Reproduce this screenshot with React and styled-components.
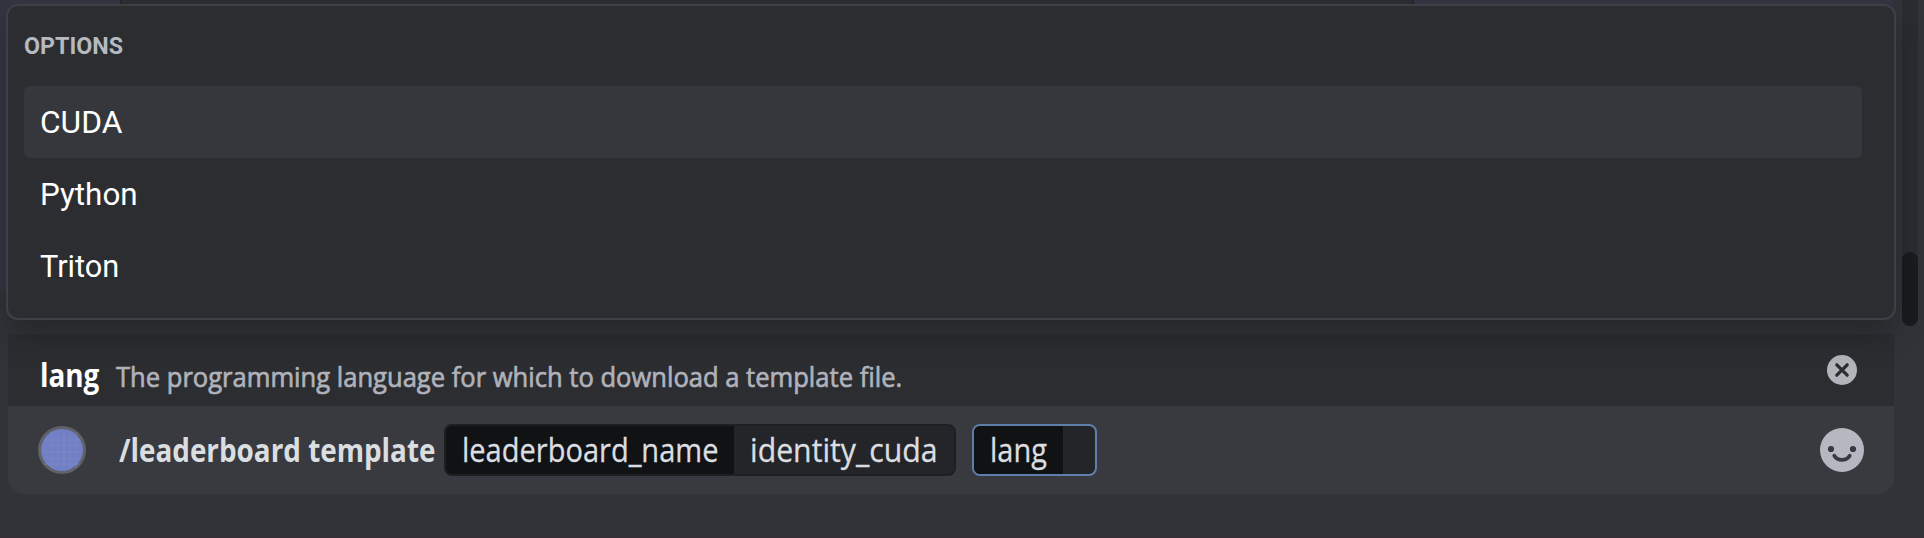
import React from "react";
import styled, { createGlobalStyle } from "styled-components";

const Global = createGlobalStyle`
  * { box-sizing: border-box; }
  body { margin: 0; background: #313338; overflow: hidden; font-family: "Open Sans", "Noto Sans", sans-serif; }
`;

const Screen = styled.main`
  position: relative;
  display: flex;
  width: 1924px;
  height: 538px;
  background: #323338;
  border-bottom: 2px solid #352f38;
  overflow: hidden;
`;

const MessageBackdrop = styled.div`
  position: absolute;
  inset: 0 31px auto 0;
  height: 290px;
  display: flex;
  background: #353443;
`;

const EmbedCard = styled.div`
  width: 1294px;
  margin-left: 120px;
  background: #2e2f34;
  border: solid #26272b;
  border-width: 0 2px;
`;

const Composer = styled.section`
  position: relative;
  display: flex;
  flex-direction: column;
  width: 1890px;
  margin: 4px 0 0 6px;
`;

const Narrow = styled.span`
  display: inline-block;
  white-space: nowrap;
  transform: scaleX(${(p) => p.$by});
  transform-origin: left;
`;

const Popup = styled.div`
  position: relative;
  z-index: 1;
  height: 316px;
  padding: 16px 32px 16px 16px;
  background: #2c2d31;
  border: 2px solid #3f4046;
  border-radius: 12px;
  box-shadow: 0 16px 32px rgba(0, 0, 0, 0.24);
  font-family: Roboto, "Open Sans", sans-serif;
`;

const Heading = styled.h2`
  margin: 0;
  height: 64px;
  font-size: 24px;
  font-weight: 700;
  line-height: 48px;
  color: #b5bac1;
`;

const Option = styled.div`
  height: 72px;
  padding-left: 16px;
  border-radius: 6px;
  background: ${(p) => (p.$active ? "#36373c" : "transparent")};
  font-size: 32px;
  line-height: 72px;
  color: #fff;
`;

const Hint = styled.div`
  display: flex;
  align-items: baseline;
  height: 72px;
  margin: 14px 2px 0;
  padding: 0 37px 0 32px;
  background: #2b2d31;
  line-height: 81px;
`;

const HintName = styled.strong`
  width: 76px;
  font-size: 32px;
  color: #fff;
`;

const HintText = styled.span`
  flex: 1;
  font-size: 28px;
  color: #b0b2bb;
  -webkit-text-stroke: 0.7px #b0b2bb;
`;

const CloseIcon = styled.svg`
  width: 30px;
  height: 30px;
  align-self: flex-start;
  margin-top: 21px;
`;

const InputBar = styled.div`
  display: flex;
  align-items: center;
  height: 88px;
  margin: 0 2px;
  padding: 0 30px;
  background: #393a3f;
  border-radius: 0 0 16px 16px;
`;

const Avatar = styled.svg`
  width: 48px;
  height: 48px;
  margin-right: 33px;
`;

const Command = styled.strong`
  width: 325px;
  font-size: 32px;
  line-height: 52px;
  color: #dbdee1;
`;

const Chip = styled.div`
  display: flex;
  height: 52px;
  margin-right: 16px;
  border: 2px solid ${(p) => (p.$focused ? "#5f7fab" : "#1e1f22")};
  border-radius: 8px;
  overflow: hidden;
  background: #242529;
  color: #dbdee1;
  font-size: 32px;
  line-height: 48px;
  white-space: nowrap;
  -webkit-text-stroke: 0.3px #dbdee1;
`;

const ChipKey = styled.span`
  width: ${(p) => p.$w}px;
  padding-left: 16px;
  background: #111214;
`;

const ChipValue = styled.span`
  width: ${(p) => p.$w}px;
  padding-left: 16px;
`;

const EmojiIcon = styled.svg`
  width: 44px;
  height: 44px;
  margin-left: auto;
`;

const ScrollTrack = styled.div`
  width: 16px;
  height: 326px;
  margin-left: 6px;
  padding-top: 252px;
  background: #2b2c31;
  border-radius: 0 0 8px 8px;
`;

const ScrollThumb = styled.div`
  height: 74px;
  border-radius: 8px;
  background: #1a1b1e;
`;

const options = [
  { label: "CUDA", active: true, scale: 0.99 },
  { label: "Python", scale: 0.98 },
  { label: "Triton", scale: 0.96 },
];

const gridLines = [14, 20, 26, 32, 38];

export default function App() {
  return (
    <Screen>
      <Global />
      <MessageBackdrop>
        <EmbedCard />
      </MessageBackdrop>
      <Composer>
        <Popup>
          <Heading>
            <Narrow $by={0.97}>OPTIONS</Narrow>
          </Heading>
          {options.map((o) => (
            <Option key={o.label} $active={o.active}>
              <Narrow $by={o.scale}>{o.label}</Narrow>
            </Option>
          ))}
        </Popup>
        <Hint>
          <HintName>
            <Narrow $by={0.87}>lang</Narrow>
          </HintName>
          <HintText>
            <Narrow $by={0.913}>The programming language for which to download a template file.</Narrow>
          </HintText>
          <CloseIcon viewBox="0 0 30 30">
            <circle cx="15" cy="15" r="15" fill="#b3b4bb" />
            <path d="M9.8 9.8 20.2 20.2M20.2 9.8 9.8 20.2" stroke="#2b2c31" strokeWidth="3.2" strokeLinecap="round" />
          </CloseIcon>
        </Hint>
        <InputBar>
          <Avatar viewBox="0 0 48 48">
            <circle cx="24" cy="24" r="24" fill="#606267" />
            <circle cx="24" cy="24" r="21" fill="#717fc4" />
            {gridLines.map((n) => (
              <path key={n} d={`M${n} 6V42M6 ${n}H42`} stroke="#8490cd" strokeWidth="0.8" opacity="0.7" />
            ))}
          </Avatar>
          <Command>
            <Narrow $by={0.87}>/leaderboard template</Narrow>
          </Command>
          <Chip>
            <ChipKey $w={288}>
              <Narrow $by={0.907}>leaderboard_name</Narrow>
            </ChipKey>
            <ChipValue $w={220}>
              <Narrow $by={0.945}>identity_cuda</Narrow>
            </ChipValue>
          </Chip>
          <Chip $focused>
            <ChipKey $w={89}>
              <Narrow $by={0.905}>lang</Narrow>
            </ChipKey>
            <ChipValue $w={32} />
          </Chip>
          <EmojiIcon viewBox="0 0 44 44">
            <circle cx="22" cy="22" r="22" fill="#b5b8c0" />
            <circle cx="11" cy="21" r="3.1" fill="#393a3f" />
            <circle cx="33" cy="21" r="3.1" fill="#393a3f" />
            <path d="M14.3 27.7C17.8 33.3 26.2 33.3 29.7 27.7" fill="none" stroke="#393a3f" strokeWidth="3.8" strokeLinecap="round" />
          </EmojiIcon>
        </InputBar>
      </Composer>
      <ScrollTrack>
        <ScrollThumb />
      </ScrollTrack>
    </Screen>
  );
}
